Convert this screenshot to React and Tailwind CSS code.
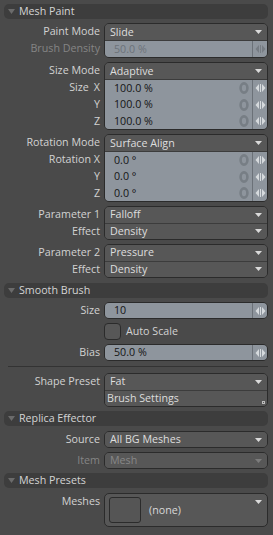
import React from "react";

const DropArrow = ({ dim }) => (
  <svg width="7" height="4" className="shrink-0">
    <path d="M0 0h7L3.5 4z" fill={dim ? "#7c7c7c" : "#dadada"} />
  </svg>
);

const Spin = ({ dim }) => (
  <svg width="11" height="8">
    <g fill={dim ? "#767c83" : "#d6dadd"}>
      <path d="M4 0L0.5 4L4 8z" />
      <rect x="5" y="0" width="1" height="8" />
      <path d="M7 0L10.5 4L7 8z" />
    </g>
  </svg>
);

const KeyRing = () => (
  <svg width="10" height="12" className="shrink-0">
    <ellipse cx="5" cy="6" rx="3.4" ry="4.6" fill="none" stroke="#777e85" strokeWidth="2.6" />
  </svg>
);

function Header({ title, className = "" }) {
  return (
    <div className={`h-[15px] rounded-[5px] bg-[#3d3d3d] flex items-center ${className}`}>
      <svg width="7" height="5" className="ml-[4px] shrink-0">
        <path d="M0 0h7L3.5 5z" fill="#6b6b6b" />
      </svg>
      <span className="ml-[4px] text-[#d4d4d4]">{title}</span>
    </div>
  );
}

function Label({ children, dim }) {
  return (
    <div className={`h-[17px] flex items-center justify-end whitespace-nowrap ${dim ? "text-[#858585]" : "text-[#d2d2d2]"}`}>
      {children}
    </div>
  );
}

function Row({ row, first, prev }) {
  if (row.type === "num") {
    const divider = !first && prev && prev.type !== "num";
    return (
      <div className={`flex-1 flex items-center bg-[#8e959d] ${divider ? "border-t border-[#3c3c3c]" : ""}`}>
        <span className={`pl-[9px] flex-1 ${row.disabled ? "text-[#6c7279]" : "text-[#141414]"}`}>{row.value}</span>
        {row.key && (
          <span className="mr-[3px] flex items-center">
            <KeyRing />
          </span>
        )}
        <div className="w-[15px] h-full border-l border-[#6b7178] flex items-center justify-center">
          <Spin dim={row.disabled} />
        </div>
      </div>
    );
  }
  if (row.type === "text") {
    return (
      <div className={`flex-1 relative flex items-center bg-[#575757] ${first ? "" : "border-t border-[#3c3c3c]"}`}>
        <span className="pl-[2px] text-[#dcdcdc]">{row.value}</span>
        <span className="absolute right-[2px] bottom-[2px] w-[3px] h-[3px] border border-[#bdbdbd]" />
      </div>
    );
  }
  return (
    <div className={`flex-1 flex items-center bg-[#575757] ${first ? "" : "border-t border-[#3c3c3c]"}`}>
      <span className={`pl-[5px] flex-1 ${row.disabled ? "text-[#878787]" : "text-[#dedede]"}`}>{row.value}</span>
      <span className="mr-[5px] flex items-center">
        <DropArrow dim={row.disabled} />
      </span>
    </div>
  );
}

function Group({ rows, h, className = "" }) {
  return (
    <div className={`flex ${className}`}>
      <div className="w-[96px] flex flex-col">
        {rows.map((r, i) => (
          <Label key={i} dim={r.disabled}>{r.label}</Label>
        ))}
      </div>
      <div className={`ml-[4px] w-[164px] ${h} rounded-[5px] border border-[#2b2b2b] overflow-hidden flex flex-col`}>
        {rows.map((r, i) => (
          <Row key={i} row={r} first={i === 0} prev={rows[i - 1]} />
        ))}
      </div>
    </div>
  );
}

const sizeLabel = (axis) => (
  <>
    <span className="mr-[5px]">Size</span>
    {axis}
  </>
);

export default function App() {
  return (
    <div className="w-[273px] h-[535px] bg-[#4a4a4a] pl-[4px] pr-[5px] pt-[4px] font-['Open_Sans',sans-serif] text-[10.7px] leading-none overflow-hidden flex flex-col">
      <Header title="Mesh Paint" />
      <Group
        className="mt-[4px]"
        h="h-[35px]"
        rows={[
          { label: "Paint Mode", type: "drop", value: "Slide" },
          { label: "Brush Density", type: "num", value: "50.0 %", disabled: true },
        ]}
      />
      <Group
        className="mt-[4px]"
        h="h-[68px]"
        rows={[
          { label: "Size Mode", type: "drop", value: "Adaptive" },
          { label: sizeLabel("X"), type: "num", value: "100.0 %", key: true },
          { label: "Y", type: "num", value: "100.0 %", key: true },
          { label: "Z", type: "num", value: "100.0 %", key: true },
        ]}
      />
      <Group
        className="mt-[4px]"
        h="h-[68px]"
        rows={[
          { label: "Rotation Mode", type: "drop", value: "Surface Align" },
          { label: "Rotation X", type: "num", value: "0.0 °", key: true },
          { label: "Y", type: "num", value: "0.0 °", key: true },
          { label: "Z", type: "num", value: "0.0 °", key: true },
        ]}
      />
      <Group
        className="mt-[4px]"
        h="h-[34px]"
        rows={[
          { label: "Parameter 1", type: "drop", value: "Falloff" },
          { label: "Effect", type: "drop", value: "Density" },
        ]}
      />
      <Group
        className="mt-[4px]"
        h="h-[34px]"
        rows={[
          { label: "Parameter 2", type: "drop", value: "Pressure" },
          { label: "Effect", type: "drop", value: "Density" },
        ]}
      />

      <Header title="Smooth Brush" className="mt-[5px]" />
      <Group className="mt-[4px]" h="h-[17px]" rows={[{ label: "Size", type: "num", value: "10" }]} />
      <div className="mt-[4px] flex items-center h-[17px]">
        <div className="ml-[100px] w-[17px] h-[17px] rounded-[4px] border border-[#2b2b2b] bg-[#575757]" />
        <span className="ml-[5px] text-[#d2d2d2]">Auto Scale</span>
      </div>
      <Group className="mt-[4px]" h="h-[17px]" rows={[{ label: "Bias", type: "num", value: "50.0 %" }]} />
      <div className="mt-[5px] ml-[4px] h-px bg-[#333333]" />
      <Group
        className="mt-[6px]"
        h="h-[34px]"
        rows={[
          { label: "Shape Preset", type: "drop", value: "Fat" },
          { label: "", type: "text", value: "Brush Settings" },
        ]}
      />

      <Header title="Replica Effector" className="mt-[4px]" />
      <Group className="mt-[5px]" h="h-[17px]" rows={[{ label: "Source", type: "drop", value: "All BG Meshes" }]} />
      <Group className="mt-[4px]" h="h-[17px]" rows={[{ label: "Item", type: "drop", value: "Mesh", disabled: true }]} />

      <Header title="Mesh Presets" className="mt-[4px]" />
      <div className="mt-[5px] flex">
        <div className="w-[96px] h-[17px] flex items-center justify-end text-[#d2d2d2]">Meshes</div>
        <div className="ml-[4px] w-[164px] h-[34px] rounded-[5px] border border-[#2b2b2b] bg-[#575757] flex items-center relative">
          <div className="ml-[4px] w-[32px] h-[26px] rounded-[3px] border border-[#2b2b2b] bg-[#555555]" />
          <span className="ml-[8px] text-[#d8d8d8]">(none)</span>
          <span className="absolute right-[5px] top-[6px] flex">
            <DropArrow />
          </span>
        </div>
      </div>
    </div>
  );
}
